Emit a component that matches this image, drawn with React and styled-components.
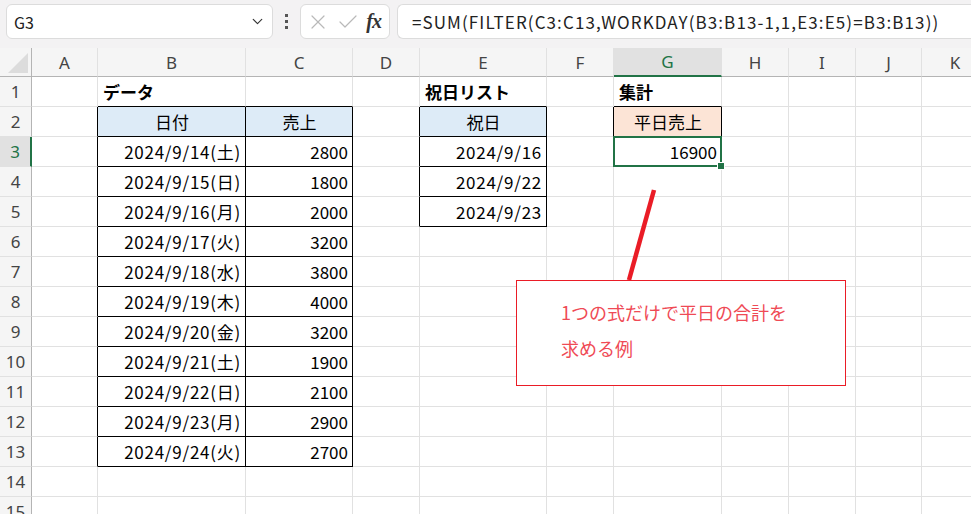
import React from "react";
import styled, { createGlobalStyle } from "styled-components";
import { ChevronDown, X, Check } from "lucide-react";

const GlobalStyle = createGlobalStyle`
  body {
    margin: 0;
    background: #ffffff;
    font-family: "Noto Sans CJK JP", "Noto Sans", sans-serif;
    overflow: hidden;
  }
`;

const colors = {
  bar: "#f3f2f3",
  header: "#f5f5f5",
  headerSel: "#e1e1e1",
  grid: "#e1e1e1",
  headerLine: "#b4b4b4",
  green: "#217346",
  blue: "#ddebf7",
  orange: "#fce4d6",
  red: "#ea1c26",
  redText: "#ef4a55",
  text: "#000000",
  muted: "#444444",
};

const COLUMNS = [
  ["A", 66],
  ["B", 148],
  ["C", 107],
  ["D", 67],
  ["E", 127],
  ["F", 67],
  ["G", 108],
  ["H", 67],
  ["I", 67],
  ["J", 66],
  ["K", 67],
];

const ROW_COUNT = 15;
const SELECTED = { col: "G", row: 3 };

const dates = [
  ["14", "土", 2800],
  ["15", "日", 1800],
  ["16", "月", 2000],
  ["17", "火", 3200],
  ["18", "水", 3800],
  ["19", "木", 4000],
  ["20", "金", 3200],
  ["21", "土", 1900],
  ["22", "日", 2100],
  ["23", "月", 2900],
  ["24", "火", 2700],
];

// cell contents keyed by address
const cells = {
  B1: { text: "データ", bold: true },
  E1: { text: "祝日リスト", bold: true },
  G1: { text: "集計", bold: true },
  B2: { text: "日付", bg: colors.blue, align: "center" },
  C2: { text: "売上", bg: colors.blue, align: "center" },
  E2: { text: "祝日", bg: colors.blue, align: "center" },
  G2: { text: "平日売上", bg: colors.orange, align: "center" },
  E3: { text: "2024/9/16", align: "right", date: true },
  E4: { text: "2024/9/22", align: "right", date: true },
  E5: { text: "2024/9/23", align: "right", date: true },
  G3: { text: "16900", align: "right" },
};
dates.forEach(([d, w, v], i) => {
  cells[`B${i + 3}`] = { text: `2024/9/${d}(${w})`, align: "right", date: true };
  cells[`C${i + 3}`] = { text: String(v), align: "right" };
});

const tables = [
  { cols: ["B", "C"], from: 2, to: 13 },
  { cols: ["E"], from: 2, to: 5 },
  { cols: ["G"], from: 2, to: 3 },
];

const inTable = (col, row) =>
  tables.some((t) => t.cols.includes(col) && row >= t.from && row <= t.to);

const Page = styled.div`
  width: 971px;
  height: 514px;
  overflow: hidden;
  display: flex;
  flex-direction: column;
`;

const Toolbar = styled.div`
  height: 48px;
  flex-shrink: 0;
  background: ${colors.bar};
  display: flex;
  align-items: flex-start;
  padding: 4px 0 0 6px;
  box-sizing: border-box;
`;

const Box = styled.div`
  height: 35px;
  background: #ffffff;
  border: 1px solid #dcdcdc;
  border-radius: 6px;
  box-sizing: border-box;
  display: flex;
  align-items: center;
`;

const NameBox = styled(Box)`
  width: 267px;
  padding: 0 6px 0 7px;
  justify-content: space-between;
  font-size: 16px;
  color: #222;
`;

const Dots = styled.div`
  width: 27px;
  height: 35px;
  display: flex;
  flex-direction: column;
  align-items: center;
  justify-content: center;
  gap: 3px;

  span {
    width: 3px;
    height: 3px;
    background: #555;
  }
`;

const FxBox = styled(Box)`
  width: 90px;
  padding: 0 8px 0 5px;
  gap: 6px;
  color: #b9b9b9;
`;

const Fx = styled.span`
  font-family: "Liberation Serif", serif;
  font-style: italic;
  font-weight: bold;
  font-size: 20px;
  color: #333;
  margin-left: auto;
  letter-spacing: -1px;
`;

const FormulaBox = styled(Box)`
  flex: 1;
  margin-left: 7px;
  border-right: none;
  border-radius: 6px 0 0 6px;
  padding-left: 14px;
  font-size: 17px;
  letter-spacing: 1.1px;
  color: #222;
  white-space: nowrap;
  overflow: hidden;
`;

const Sheet = styled.div`
  position: relative;
  flex: 1;
  overflow: hidden;
  display: grid;
  grid-template-columns: 32px ${COLUMNS.map(([, w]) => `${w}px`).join(" ")};
  grid-template-rows: 29px repeat(${ROW_COUNT}, 30px);
`;

const Corner = styled.div`
  background: ${colors.header};
  border-right: 1px solid ${colors.headerLine};
  border-bottom: 1px solid ${colors.headerLine};
  box-sizing: border-box;
  position: relative;

  &::after {
    content: "";
    position: absolute;
    right: 3px;
    bottom: 3px;
    border-left: 20px solid transparent;
    border-bottom: 20px solid #dcdcdc;
  }
`;

const ColHead = styled.div`
  background: ${(p) => (p.$selected ? colors.headerSel : colors.header)};
  color: ${(p) => (p.$selected ? colors.green : colors.muted)};
  border-right: 1px solid ${colors.grid};
  border-bottom: ${(p) =>
    p.$selected ? `2px solid ${colors.green}` : `1px solid ${colors.headerLine}`};
  box-sizing: border-box;
  display: flex;
  align-items: center;
  justify-content: center;
  font-family: "Noto Sans", sans-serif;
  font-size: 17px;
`;

const RowHead = styled.div`
  background: ${(p) => (p.$selected ? colors.headerSel : colors.header)};
  color: ${(p) => (p.$selected ? colors.green : colors.muted)};
  border-right: ${(p) =>
    p.$selected ? `2px solid ${colors.green}` : `1px solid ${colors.headerLine}`};
  border-bottom: 1px solid ${colors.grid};
  box-sizing: border-box;
  display: flex;
  align-items: center;
  justify-content: center;
  font-family: "Noto Sans", sans-serif;
  font-size: 17px;
`;

const Cell = styled.div`
  position: relative;
  background: ${(p) => p.$bg || "#ffffff"};
  border-right: 1px solid ${(p) => p.$right};
  border-bottom: 1px solid ${(p) => p.$bottom};
  box-sizing: border-box;
  display: flex;
  align-items: center;
  justify-content: ${(p) =>
    p.$align === "right" ? "flex-end" : p.$align === "center" ? "center" : "flex-start"};
  padding: 0 4px 0 5px;
  font-size: 17px;
  font-weight: ${(p) => (p.$bold ? 700 : 400)};
  letter-spacing: ${(p) => (p.$date ? "0.75px" : "0")};
  color: ${colors.text};
  white-space: nowrap;

  ${(p) =>
    p.$selected &&
    `
    &::after {
      content: "";
      position: absolute;
      left: -1px;
      top: -1px;
      right: -1px;
      bottom: -1px;
      border: 2px solid ${colors.green};
    }
    &::before {
      content: "";
      position: absolute;
      right: -4px;
      bottom: -4px;
      width: 6px;
      height: 6px;
      background: ${colors.green};
      border: 1px solid #fff;
      z-index: 2;
    }
  `}
`;

const Callout = styled.div`
  position: absolute;
  left: 516px;
  top: 232px;
  width: 330px;
  height: 106px;
  box-sizing: border-box;
  border: 1px solid ${colors.red};
  background: #ffffff;
  padding: 13px 0 0 44px;
  font-size: 18px;
  line-height: 36px;
  color: ${colors.redText};
  z-index: 3;
`;

const Arrow = styled.svg`
  position: absolute;
  left: 0;
  top: 0;
  pointer-events: none;
  z-index: 4;
`;

const App = () => {
  const rows = Array.from({ length: ROW_COUNT }, (_, i) => i + 1);
  const colKeys = COLUMNS.map(([k]) => k);

  return (
    <Page>
      <GlobalStyle />
      <Toolbar>
        <NameBox>
          <span>G3</span>
          <ChevronDown size={17} strokeWidth={1.6} color="#333" />
        </NameBox>
        <Dots>
          <span />
          <span />
          <span />
        </Dots>
        <FxBox>
          <X size={24} strokeWidth={1.2} />
          <Check size={24} strokeWidth={1.2} />
          <Fx>fx</Fx>
        </FxBox>
        <FormulaBox>
          =SUM(FILTER(C3:C13,WORKDAY(B3:B13-1,1,E3:E5)=B3:B13))
        </FormulaBox>
      </Toolbar>

      <Sheet>
        <Corner />
        {colKeys.map((c) => (
          <ColHead key={c} $selected={c === SELECTED.col}>
            {c}
          </ColHead>
        ))}

        {rows.map((r) => (
          <React.Fragment key={r}>
            <RowHead $selected={r === SELECTED.row}>{r}</RowHead>
            {colKeys.map((c, ci) => {
              const data = cells[`${c}${r}`] || {};
              const next = colKeys[ci + 1];
              const boxed = inTable(c, r);
              const right = boxed || (next && inTable(next, r)) ? "#000" : colors.grid;
              const bottom = boxed || inTable(c, r + 1) ? "#000" : colors.grid;
              return (
                <Cell
                  key={c}
                  $bg={data.bg}
                  $align={data.align}
                  $bold={data.bold}
                  $date={data.date}
                  $right={right}
                  $bottom={bottom}
                  $selected={c === SELECTED.col && r === SELECTED.row}
                >
                  {data.text}
                </Cell>
              );
            })}
          </React.Fragment>
        ))}

        <Arrow width="971" height="466" viewBox="0 0 971 466">
          <line
            x1="654"
            y1="142"
            x2="629"
            y2="232"
            stroke={colors.red}
            strokeWidth="4.5"
          />
        </Arrow>
        <Callout>
          1つの式だけで平日の合計を
          <br />
          求める例
        </Callout>
      </Sheet>
    </Page>
  );
};

export default App;
